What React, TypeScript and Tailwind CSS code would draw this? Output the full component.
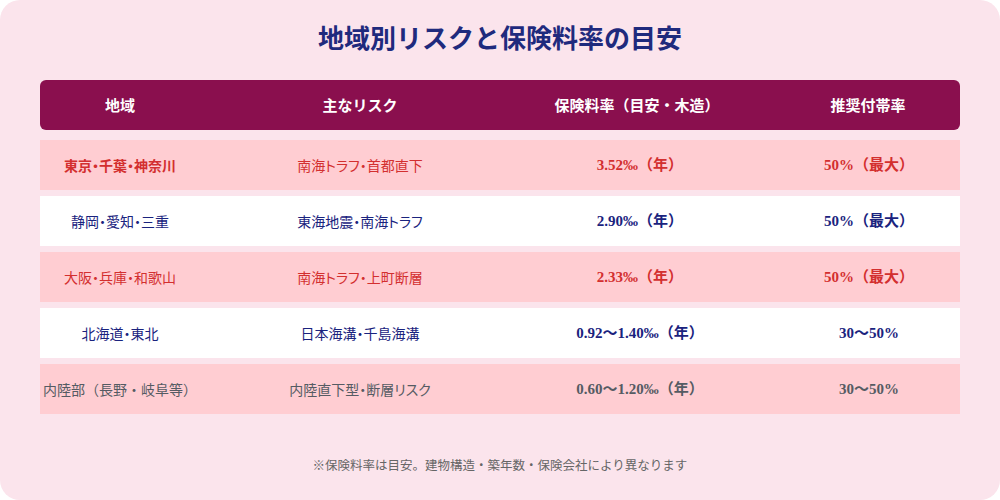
const rows = [
  {
    region: "東京・千葉・神奈川",
    risk: "南海トラフ・首都直下",
    rate: "3.52‰（年）",
    ratio: "50%（最大）",
    bg: "bg-[#ffcdd2]",
    color: "text-[#d32f2f]",
    boldRegion: true,
  },
  {
    region: "静岡・愛知・三重",
    risk: "東海地震・南海トラフ",
    rate: "2.90‰（年）",
    ratio: "50%（最大）",
    bg: "bg-white",
    color: "text-[#1a237e]",
  },
  {
    region: "大阪・兵庫・和歌山",
    risk: "南海トラフ・上町断層",
    rate: "2.33‰（年）",
    ratio: "50%（最大）",
    bg: "bg-[#ffcdd2]",
    color: "text-[#d32f2f]",
  },
  {
    region: "北海道・東北",
    risk: "日本海溝・千島海溝",
    rate: "0.92〜1.40‰（年）",
    ratio: "30〜50%",
    bg: "bg-white",
    color: "text-[#1a237e]",
  },
  {
    region: "内陸部（長野・岐阜等）",
    risk: "内陸直下型・断層リスク",
    rate: "0.60〜1.20‰（年）",
    ratio: "30〜50%",
    bg: "bg-[#ffcdd2]",
    color: "text-[#555b63]",
  },
]

const cols = "grid grid-cols-[160px_320px_234px_206px] items-center"

// 括弧は全角のまま、それ以外はプロポーショナル詰め
const textCls = (t: string) =>
  t.includes("（") ? "text-center" : "text-center [font-feature-settings:'palt']"

export default function App() {
  return (
    <div className="flex h-[500px] w-[1000px] flex-col items-center rounded-[20px] bg-[#fbe4ec] pt-[20px] font-['Noto_Sans_CJK_JP',sans-serif]">
      <h1 className="mb-[26px] text-[26px] font-bold leading-[34px] text-[#1f2a7d]">
        地域別リスクと保険料率の目安
      </h1>

      <div className="w-[920px]">
        <div className={`${cols} h-[50px] rounded-[6px] bg-[#8a0f4e] text-[15px] font-bold text-white`}>
          <div className="text-center">地域</div>
          <div className="text-center">主なリスク</div>
          <div className="text-center">保険料率（目安・木造）</div>
          <div className="pl-[22px] text-center">推奨付帯率</div>
        </div>

        <div className="mt-[10px] flex flex-col gap-[6px]">
          {rows.map((r) => (
            <div key={r.region} className={`${cols} h-[50px] ${r.bg} ${r.color} text-[14px]`}>
              <div className={`whitespace-nowrap ${textCls(r.region)} ${r.boldRegion ? "font-bold" : ""}`}>
                {r.region}
              </div>
              <div className={textCls(r.risk)}>{r.risk}</div>
              <div className="pl-[6px] text-center font-['Liberation_Serif','Noto_Sans_CJK_JP',serif] text-[15px] font-bold">
                {r.rate}
              </div>
              <div className="pl-[24px] text-center font-['Liberation_Serif','Noto_Sans_CJK_JP',serif] text-[15px] font-bold">
                {r.ratio}
              </div>
            </div>
          ))}
        </div>
      </div>

      <p className="mt-[42px] text-[12.5px] leading-[18px] text-[#666]">
        ※保険料率は目安。建物構造・築年数・保険会社により異なります
      </p>
    </div>
  )
}
